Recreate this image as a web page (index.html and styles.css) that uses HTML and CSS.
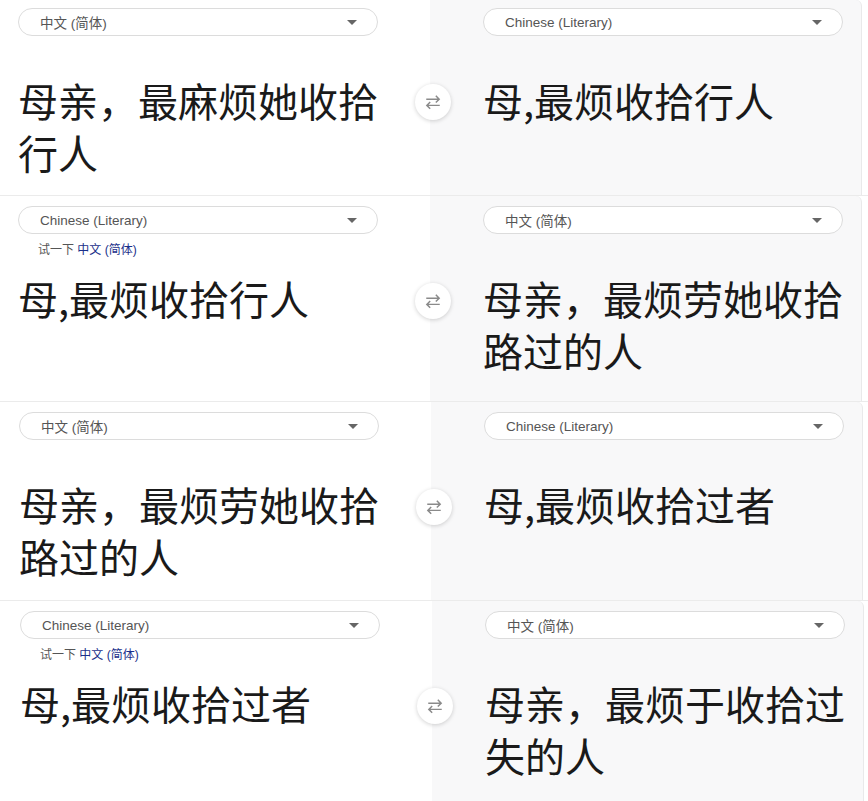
FILE: index.html
```html
<!DOCTYPE html>
<html lang="zh-CN">
<head>
  <meta charset="utf-8" />
  <title>翻译对照</title>
  <link rel="stylesheet" href="styles.css">
</head>
<body>

  <section class="panel panel-a">
    <div class="side src">
      <div class="lang-select"><span>中文 (简体)</span><span class="caret"></span></div>
      <div class="hint"></div>
      <div class="big-text">母亲，最麻烦她收拾行人</div>
    </div>
    <button class="swap" aria-label="swap">
      <svg viewBox="0 0 16 16" width="18" height="18"><path d="M2 5.5H13.5M10.5 2.5L13.5 5.5L10.5 8.5M14 11H2.5M5.5 8L2.5 11L5.5 14" /></svg>
    </button>
    <div class="side out">
      <div class="lang-select"><span>Chinese (Literary)</span><span class="caret"></span></div>
      <div class="hint"></div>
      <div class="big-text">母,最烦收拾行人</div>
    </div>
  </section>

  <section class="panel panel-b">
    <div class="side src">
      <div class="lang-select"><span>Chinese (Literary)</span><span class="caret"></span></div>
      <div class="hint">试一下 <a href="#">中文 (简体)</a></div>
      <div class="big-text">母,最烦收拾行人</div>
    </div>
    <button class="swap" aria-label="swap">
      <svg viewBox="0 0 16 16" width="18" height="18"><path d="M2 5.5H13.5M10.5 2.5L13.5 5.5L10.5 8.5M14 11H2.5M5.5 8L2.5 11L5.5 14" /></svg>
    </button>
    <div class="side out">
      <div class="lang-select"><span>中文 (简体)</span><span class="caret"></span></div>
      <div class="hint"></div>
      <div class="big-text">母亲，最烦劳她收拾路过的人</div>
    </div>
  </section>

  <section class="panel panel-c">
    <div class="side src">
      <div class="lang-select"><span>中文 (简体)</span><span class="caret"></span></div>
      <div class="hint"></div>
      <div class="big-text">母亲，最烦劳她收拾路过的人</div>
    </div>
    <button class="swap" aria-label="swap">
      <svg viewBox="0 0 16 16" width="18" height="18"><path d="M2 5.5H13.5M10.5 2.5L13.5 5.5L10.5 8.5M14 11H2.5M5.5 8L2.5 11L5.5 14" /></svg>
    </button>
    <div class="side out">
      <div class="lang-select"><span>Chinese (Literary)</span><span class="caret"></span></div>
      <div class="hint"></div>
      <div class="big-text">母,最烦收拾过者</div>
    </div>
  </section>

  <section class="panel panel-d">
    <div class="side src">
      <div class="lang-select"><span>Chinese (Literary)</span><span class="caret"></span></div>
      <div class="hint">试一下 <a href="#">中文 (简体)</a></div>
      <div class="big-text">母,最烦收拾过者</div>
    </div>
    <button class="swap" aria-label="swap">
      <svg viewBox="0 0 16 16" width="18" height="18"><path d="M2 5.5H13.5M10.5 2.5L13.5 5.5L10.5 8.5M14 11H2.5M5.5 8L2.5 11L5.5 14" /></svg>
    </button>
    <div class="side out">
      <div class="lang-select"><span>中文 (简体)</span><span class="caret"></span></div>
      <div class="hint"></div>
      <div class="big-text">母亲，最烦于收拾过失的人</div>
    </div>
  </section>

</body>
</html>
```
FILE: styles.css
```css
body {
  margin: 0;
  background: #fff;
  font-family: "Liberation Sans", Arial, "Noto Sans CJK SC", sans-serif;
  color: #222;
}

.panel {
  position: relative;
  display: grid;
  grid-template-columns: 430px 432px;
  border-top: 1px solid #ebebeb;
  box-sizing: border-box;
}

.panel-a {
  height: 195px;
  border-top: none;
}
.panel-b { height: 206px; }
.panel-c { height: 199px; padding-left: 1px; }
.panel-d { height: 201px; padding-left: 2px; }

.side {
  padding-top: 10px;
  box-sizing: border-box;
}

.panel-a .side {
  padding-top: 8px;
}

.src {
  padding-left: 18px;
}

.out {
  padding-left: 53px;
  background: #f8f8f9;
  border-right: 1px solid #e9e9ea;
  border-top-right-radius: 6px;
}

.lang-select {
  width: 360px;
  height: 28px;
  box-sizing: border-box;
  display: flex;
  align-items: center;
  justify-content: space-between;
  padding: 0 20px 0 21px;
  border: 1px solid #dcdcdc;
  border-radius: 14px;
  background: #fff;
  font-size: 13.5px;
  color: #555;
}

.caret {
  width: 0;
  height: 0;
  border-left: 5px solid transparent;
  border-right: 5px solid transparent;
  border-top: 5px solid #666;
}

.hint {
  height: 22px;
  margin-top: 5px;
  padding-left: 20px;
  font-size: 12px;
  line-height: 22px;
  color: #555;
}

.hint a {
  color: #1a2f8a;
  text-decoration: none;
}

.big-text {
  width: 362px;
  margin-top: 11px;
  font-family: "Noto Sans CJK SC", sans-serif;
  font-size: 40px;
  line-height: 52px;
  color: #1a1a1a;
}

.swap {
  position: absolute;
  left: 415px;
  top: 87px;
  width: 36px;
  height: 36px;
  padding: 0;
  border: none;
  border-radius: 50%;
  background: #fff;
  box-shadow: 0 1px 4px rgba(0, 0, 0, 0.18);
  display: flex;
  align-items: center;
  justify-content: center;
}

.panel-a .swap {
  top: 84px;
}
.panel-c .swap { left: 416px; }
.panel-d .swap { left: 417px; }

.swap svg path {
  fill: none;
  stroke: #8a8a8a;
  stroke-width: 1.3;
}
```
